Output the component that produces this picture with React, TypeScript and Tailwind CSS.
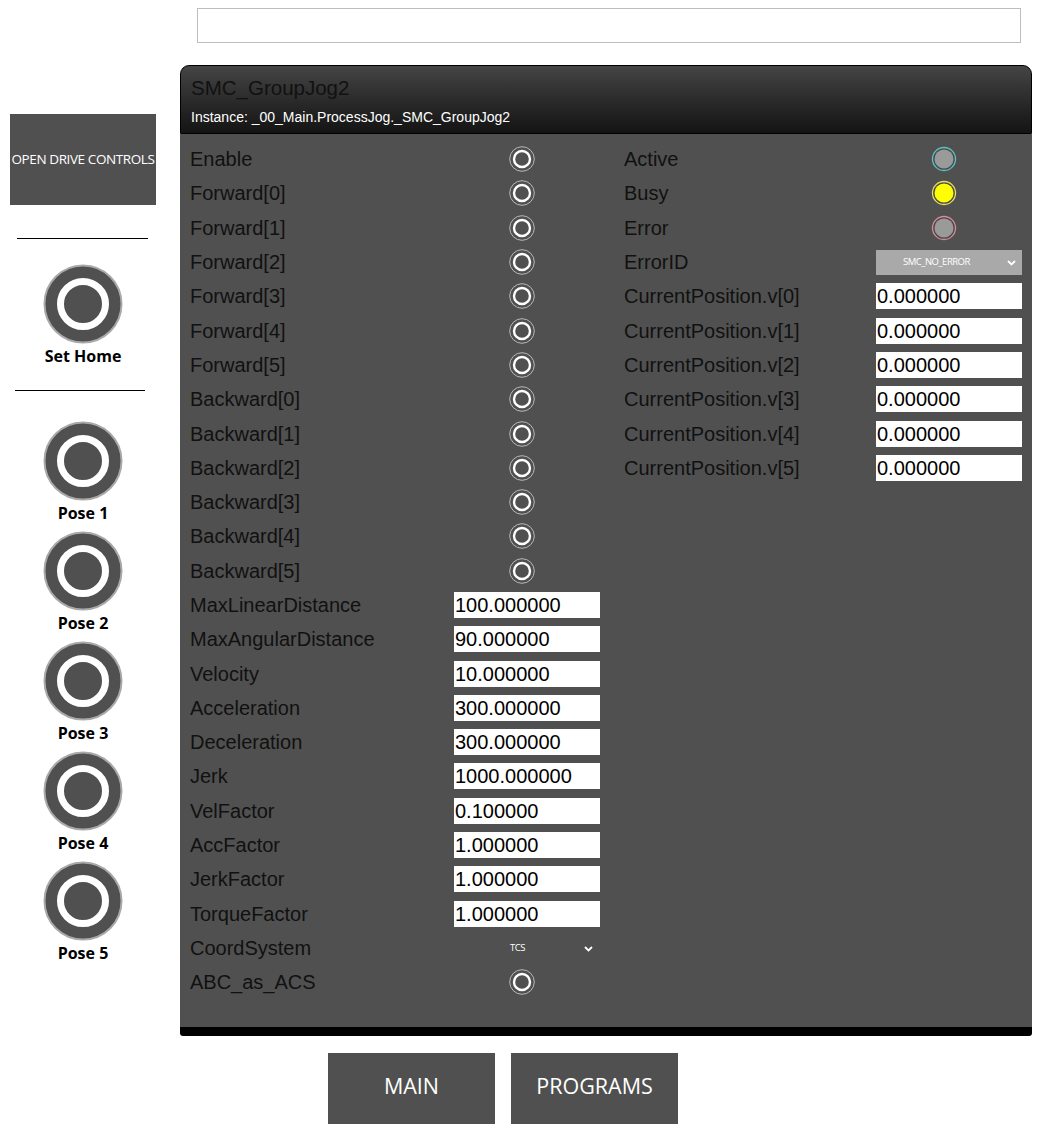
import React from "react";

const leftRows: { label: string; kind: "radio" | "input" | "select"; value?: string }[] = [
  { label: "Enable", kind: "radio" },
  { label: "Forward[0]", kind: "radio" },
  { label: "Forward[1]", kind: "radio" },
  { label: "Forward[2]", kind: "radio" },
  { label: "Forward[3]", kind: "radio" },
  { label: "Forward[4]", kind: "radio" },
  { label: "Forward[5]", kind: "radio" },
  { label: "Backward[0]", kind: "radio" },
  { label: "Backward[1]", kind: "radio" },
  { label: "Backward[2]", kind: "radio" },
  { label: "Backward[3]", kind: "radio" },
  { label: "Backward[4]", kind: "radio" },
  { label: "Backward[5]", kind: "radio" },
  { label: "MaxLinearDistance", kind: "input", value: "100.000000" },
  { label: "MaxAngularDistance", kind: "input", value: "90.000000" },
  { label: "Velocity", kind: "input", value: "10.000000" },
  { label: "Acceleration", kind: "input", value: "300.000000" },
  { label: "Deceleration", kind: "input", value: "300.000000" },
  { label: "Jerk", kind: "input", value: "1000.000000" },
  { label: "VelFactor", kind: "input", value: "0.100000" },
  { label: "AccFactor", kind: "input", value: "1.000000" },
  { label: "JerkFactor", kind: "input", value: "1.000000" },
  { label: "TorqueFactor", kind: "input", value: "1.000000" },
  { label: "CoordSystem", kind: "select", value: "TCS" },
  { label: "ABC_as_ACS", kind: "radio" },
];

const poses = ["Pose 1", "Pose 2", "Pose 3", "Pose 4", "Pose 5"];

function Radio() {
  return (
    <svg width="28" height="28" viewBox="0 0 28 28">
      <circle cx="14" cy="14" r="12.3" fill="none" stroke="#b8b8b8" strokeWidth="1" />
      <circle cx="14" cy="14" r="8" fill="none" stroke="#ffffff" strokeWidth="2.4" />
    </svg>
  );
}

function Lamp({ ring, fill }: { ring: string; fill: string }) {
  return (
    <svg width="26" height="26" viewBox="0 0 26 26">
      <circle cx="13" cy="13" r="11.5" fill="#4a4a4a" stroke={ring} strokeWidth="1.3" />
      <circle cx="13" cy="13" r="9.5" fill={fill} />
    </svg>
  );
}

function Chevron() {
  return (
    <svg width="9" height="6" viewBox="0 0 9 6">
      <path d="M1 1 L4.5 4.5 L8 1" fill="none" stroke="#ffffff" strokeWidth="1.8" />
    </svg>
  );
}

function BigButton({ label }: { label: string }) {
  return (
    <div className="flex flex-col items-center">
      <svg width="80" height="80" viewBox="0 0 80 80">
        <circle cx="40" cy="40" r="38.5" fill="#505050" stroke="#a9a9a9" strokeWidth="2" />
        <circle cx="40" cy="40" r="22.5" fill="#505050" stroke="#ffffff" strokeWidth="7" />
      </svg>
      <div className="mt-[2px] text-[16px] font-bold leading-[20px] text-black">{label}</div>
    </div>
  );
}

function TextBox({ value }: { value: string }) {
  return (
    <div className="h-[26px] w-[146px] bg-white pl-[1px] text-[20px] leading-[26px] text-black">
      {value}
    </div>
  );
}

export default function App() {
  return (
    <div
      className="flex h-[1136px] w-[1058px] bg-white"
      style={{ fontFamily: '"Liberation Sans", Arial, sans-serif' }}
    >
      {/* side bar */}
      <div className="flex w-[180px] flex-col" style={{ fontFamily: '"Open Sans", "Noto Sans", sans-serif' }}>
        <div className="ml-[10px] mt-[114px] flex h-[91px] w-[146px] items-center justify-center bg-[#505050] text-[13.5px] tracking-[-0.4px] text-white">
          OPEN DRIVE CONTROLS
        </div>
        <div className="ml-[17px] mt-[33px] h-[1px] w-[131px] bg-black" />
        <div className="ml-[43px] mt-[25px] w-[80px]">
          <BigButton label="Set Home" />
        </div>
        <div className="ml-[15px] mt-[24px] h-[1px] w-[130px] bg-black" />
        <div className="ml-[43px] mt-[30px] flex w-[80px] flex-col gap-[8px]">
          {poses.map((p) => (
            <BigButton key={p} label={p} />
          ))}
        </div>
      </div>

      {/* main column */}
      <div className="flex flex-col">
        <div className="ml-[17px] mt-[8px] h-[35px] w-[824px] border border-[#bdbdbd] bg-white" />

        <div className="mt-[22px] w-[852px]">
          <div className="h-[69px] rounded-t-[9px] border border-black bg-gradient-to-b from-[#454545] to-[#141414] px-[10px]">
            <div className="pt-[9px] text-[20.5px] leading-[26px] text-[#111111]">SMC_GroupJog2</div>
            <div className="mt-[7px] text-[14px] leading-[18px] text-white">
              Instance: _00_Main.ProcessJog._SMC_GroupJog2
            </div>
          </div>

          <div className="flex h-[893px] bg-[#505050] px-[10px] pt-[8px] text-[20px] text-[#111111]">
            <div className="flex w-[410px] flex-col">
              {leftRows.map((r) => (
                <div key={r.label} className="flex h-[34.3px] items-center justify-between">
                  <span className="leading-[24px]">{r.label}</span>
                  <div className="flex w-[146px] items-center">
                    {r.kind === "radio" && (
                      <div className="ml-[54px]">
                        <Radio />
                      </div>
                    )}
                    {r.kind === "input" && <TextBox value={r.value!} />}
                    {r.kind === "select" && (
                      <div
                        className="relative flex h-[26px] w-[146px] items-center"
                        style={{ fontFamily: '"Open Sans", "Noto Sans", sans-serif' }}
                      >
                        <span className="ml-[56px] text-[9.5px] tracking-[-0.5px] text-white">{r.value}</span>
                        <span className="ml-auto mr-[7px] mt-[2px]">
                          <Chevron />
                        </span>
                      </div>
                    )}
                  </div>
                </div>
              ))}
            </div>

            <div className="ml-[24px] flex w-[398px] flex-col">
              <div className="flex h-[34.3px] items-center justify-between">
                <span>Active</span>
                <div className="mr-[65px]">
                  <Lamp ring="#57c6c6" fill="#9a9a9a" />
                </div>
              </div>
              <div className="flex h-[34.3px] items-center justify-between">
                <span>Busy</span>
                <div className="mr-[65px]">
                  <Lamp ring="#e8e060" fill="#ffff00" />
                </div>
              </div>
              <div className="flex h-[34.3px] items-center justify-between">
                <span>Error</span>
                <div className="mr-[65px]">
                  <Lamp ring="#d88a98" fill="#9a9a9a" />
                </div>
              </div>
              <div className="flex h-[34.3px] items-center justify-between">
                <span>ErrorID</span>
                <div
                  className="flex h-[25px] w-[146px] items-center bg-[#a9a9a9]"
                  style={{ fontFamily: '"Open Sans", "Noto Sans", sans-serif' }}
                >
                  <span className="ml-[27px] text-[9.5px] tracking-[-0.5px] text-white">SMC_NO_ERROR</span>
                  <span className="ml-auto mr-[6px] mt-[2px]">
                    <Chevron />
                  </span>
                </div>
              </div>
              {[0, 1, 2, 3, 4, 5].map((i) => (
                <div key={i} className="flex h-[34.3px] items-center justify-between">
                  <span>CurrentPosition.v[{i}]</span>
                  <TextBox value="0.000000" />
                </div>
              ))}
            </div>
          </div>
          <div className="h-[9px] rounded-b-[3px] bg-black" />
        </div>

        <div
          className="ml-[148px] mt-[17px] flex gap-[16px]"
          style={{ fontFamily: '"Open Sans", "Noto Sans", sans-serif' }}
        >
          <div className="flex h-[71px] w-[167px] items-center justify-center bg-[#505050] pb-[4px] text-[21.5px] text-white">
            MAIN
          </div>
          <div className="flex h-[71px] w-[167px] items-center justify-center bg-[#505050] pb-[4px] text-[21.5px] text-white">
            PROGRAMS
          </div>
        </div>
      </div>
    </div>
  );
}
